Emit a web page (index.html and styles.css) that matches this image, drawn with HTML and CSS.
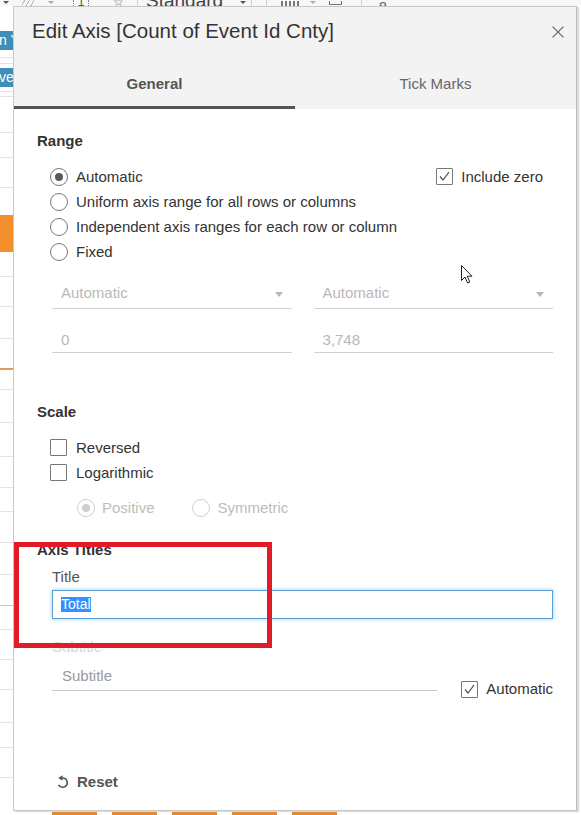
FILE: index.html
```html
<!DOCTYPE html>
<html>
<head>
<meta charset="utf-8">
<title>Edit Axis</title>
<link rel="stylesheet" href="styles.css">
</head>
<body>
<div class="app">
  <div class="toolbar">
    <span class="tb-tri dark m3"></span>
    <span class="tb-slash m13"></span>
    <span class="tb-tri m14"></span>
    <span class="tb-dot m19"><span class="tb-one">1</span></span>
    <span class="tb-star m24">☆</span>
    <span class="tb-sep m13"></span>
    <span class="tb-text m8">Standard</span>
    <span class="tb-tri dark m32"></span>
    <span class="tb-sep m5"></span>
    <span class="tb-sep m14"></span>
    <span class="tb-chart m14"></span>
    <span class="tb-tri m11"></span>
    <span class="tb-mon m13"></span>
    <span class="tb-sep m19"></span>
    <span class="tb-link m17">ⴰ</span>
  </div>
  <div class="canvas">
    <div class="strip">
      <div class="b h25"></div>
      <div class="pill h19"><span>n Y</span></div>
      <div class="r h8"></div>
      <div class="r h6"></div>
      <div class="b h4"></div>
      <div class="pill h19"><span>ve</span></div>
      <div class="r h5"></div>
      <div class="r h5"></div>
      <div class="r h36"></div>
      <div class="r h25"></div>
      <div class="r h30"></div>
      <div class="b h27"></div>
      <div class="obar h37"></div>
      <div class="r h25"></div>
      <div class="r h30"></div>
      <div class="r h32"></div>
      <div class="b h29"></div>
      <div class="oline h2"></div>
      <div class="r h20"></div>
      <div class="r h33"></div>
      <div class="r h34"></div>
      <div class="r h31"></div>
      <div class="r h24"></div>
      <div class="r h31"></div>
      <div class="r h32"></div>
      <div class="b h30"></div>
      <div class="tline h1"></div>
      <div class="r h24"></div>
      <div class="r h30"></div>
      <div class="r h30"></div>
      <div class="r h33"></div>
      <div class="r h25"></div>
      <div class="r h30"></div>
    </div>
    <div class="main">
      <div class="bars"><span></span><span></span><span></span><span></span><span></span></div>
    </div>
  </div>

  <div class="dialog">
    <div class="dlg-head">
      <div class="title-row">
        <span class="title">Edit Axis [Count of Event Id Cnty]</span>
        <svg class="close" width="12" height="12" viewBox="0 0 12 12"><path d="M0.6 0.6 L11.4 11.4 M11.4 0.6 L0.6 11.4" stroke="#666" stroke-width="1.2" fill="none"/></svg>
      </div>
      <div class="tabs">
        <div class="tab active">General</div>
        <div class="tab">Tick Marks</div>
      </div>
    </div>

    <div class="dlg-body">
      <div class="sec-h">Range</div>
      <div class="radios">
        <div class="row">
          <span class="radio on"></span><span class="lbl">Automatic</span>
          <span class="inczero"><span class="cb"><svg width="15" height="15" viewBox="0 0 15 15"><path d="M3 7.5 L6 11 L12 3.2" stroke="#555" stroke-width="1.2" fill="none"/></svg></span><span class="lbl">Include zero</span></span>
        </div>
        <div class="row"><span class="radio"></span><span class="lbl">Uniform axis range for all rows or columns</span></div>
        <div class="row"><span class="radio"></span><span class="lbl">Independent axis ranges for each row or column</span></div>
        <div class="row"><span class="radio"></span><span class="lbl">Fixed</span></div>
      </div>
      <div class="pair selects">
        <div class="select"><span>Automatic</span><span class="tri"></span></div>
        <div class="select"><span>Automatic</span><span class="tri"></span></div>
      </div>
      <div class="pair inputs">
        <div class="inp">0</div>
        <div class="inp">3,748</div>
      </div>

      <div class="sec-h scale-h">Scale</div>
      <div class="checks">
        <div class="row"><span class="cb sq"></span><span class="lbl">Reversed</span></div>
        <div class="row"><span class="cb sq"></span><span class="lbl">Logarithmic</span></div>
      </div>
      <div class="row sub-radios">
        <span class="radio dis on"></span><span class="lbl dim">Positive</span>
        <span class="radio dis sym"></span><span class="lbl dim">Symmetric</span>
      </div>

      <div class="sec-h axis-h">Axis Titles</div>
      <div class="fld-label">Title</div>
      <div class="title-input"><span class="sel">Total</span></div>
      <div class="fld-label faint">Subtitle</div>
      <div class="sub-row">
        <div class="sub-input">Subtitle</div>
        <div class="auto"><span class="cb"><svg width="15" height="15" viewBox="0 0 15 15"><path d="M3 7.5 L6 11 L12 3.2" stroke="#555" stroke-width="1.2" fill="none"/></svg></span><span class="lbl">Automatic</span></div>
      </div>
    </div>

    <div class="dlg-foot">
      <svg width="12" height="14" viewBox="0 0 12 14"><path d="M5.5 3 A4.6 4.6 0 1 1 1.6 9.8" stroke="#555" stroke-width="1.6" fill="none"/><path d="M1.2 3 L5.6 0.2 L5.6 5.8 Z" fill="#555"/></svg>
      <span class="reset">Reset</span>
    </div>
  </div>

  <div class="annot"></div>
  <svg class="cursor" width="13" height="20" viewBox="0 0 13 20"><path d="M0.5 0.5 L0.5 15.5 L4 12 L6.6 18 L8.8 17 L6.3 11.2 L11 11.2 Z" fill="#fff" stroke="#222" stroke-width="1"/></svg>
</div>
</body>
</html>
```

FILE: styles.css
```css
* { box-sizing: border-box; margin: 0; padding: 0; }
body { margin: 0; font-family: "Liberation Sans", Arial, sans-serif; color: #333; background: #fff; }

.app { position: relative; width: 581px; height: 815px; overflow: hidden; background: #fff; }

/* background toolbar (mostly hidden) */
.toolbar { height: 6px; display: flex; align-items: flex-end; overflow: hidden; background: #f7f7f7; }
.toolbar > * { flex-shrink: 0; }
.m3 { margin-left: 3px; } .m5 { margin-left: 5px; } .m8 { margin-left: 8px; } .m11 { margin-left: 11px; }
.m13 { margin-left: 13px; } .m14 { margin-left: 14px; } .m17 { margin-left: 17px; } .m19 { margin-left: 19px; }
.m24 { margin-left: 24px; } .m32 { margin-left: 32px; }
.tb-tri { width: 0; height: 0; border-left: 3px solid transparent; border-right: 3px solid transparent; border-top: 3px solid #aaa; margin-bottom: 2px; }
.tb-tri.dark { border-top-color: #555; }
.tb-slash { width: 12px; height: 6px; background: repeating-linear-gradient(120deg, transparent 0 2px, #bbb 2px 3px, transparent 3px 4px); }
.tb-dot { width: 16px; height: 6px; border-left: 1px dotted #888; border-right: 1px dotted #888; display: flex; justify-content: center; align-items: flex-end; }
.tb-one { font-size: 12px; line-height: 10px; color: #555; margin-bottom: -1px; }
.tb-star { font-size: 12px; line-height: 10px; color: #666; margin-bottom: -1px; }
.tb-sep { width: 1px; height: 6px; background: #d0d0d0; }
.tb-text { width: 62px; font-size: 19px; line-height: 19px; color: #444; margin-bottom: -4px; }
.tb-chart { width: 18px; height: 5px; background: repeating-linear-gradient(90deg, #777 0 2px, transparent 2px 4px); }
.tb-mon { width: 13px; height: 4px; border: 1px solid #777; border-top: none; margin-bottom: 1px; }
.tb-link { font-size: 12px; line-height: 10px; color: #666; margin-bottom: -2px; }

/* background sheet */
.canvas { display: flex; height: 809px; }
.strip { width: 13px; flex-shrink: 0; display: flex; flex-direction: column; overflow: hidden; }
.strip > div { flex-shrink: 0; }
.strip .r { border-bottom: 1px solid #e4e4e4; }
.pill { background: #3f8eb8; color: #fff; font-size: 14px; line-height: 19px; white-space: nowrap; overflow: hidden; }
.pill span { display: block; margin-left: -1px; }
.obar { background: #f28e2b; }
.oline { background: #e89a55; }
.tline { background: #e0c3a0; }
.h1 { height: 1px; } .h2 { height: 2px; } .h4 { height: 4px; } .h5 { height: 5px; } .h6 { height: 6px; }
.h8 { height: 8px; } .h19 { height: 19px; } .h20 { height: 20px; } .h24 { height: 24px; } .h25 { height: 25px; }
.h27 { height: 27px; } .h29 { height: 29px; } .h30 { height: 30px; } .h31 { height: 31px; } .h32 { height: 32px; }
.h33 { height: 33px; } .h34 { height: 34px; } .h36 { height: 36px; } .h37 { height: 37px; }
.main { flex: 1; display: flex; flex-direction: column; justify-content: flex-end; }
.bars { display: flex; gap: 15px; padding-left: 39px; height: 3px; }
.bars span { width: 45px; background: #e8892f; }

/* dialog */
.dialog {
  position: absolute; left: 13px; top: 6px; width: 564px; height: 805px;
  border: 1px solid #c8c8c8; border-right-color: #bdbdbd; background: #fff;
  box-shadow: 2px 1px 1px rgba(0,0,0,0.14);
  display: flex; flex-direction: column;
}
.dlg-head { height: 102px; background: #f3f3f3; flex-shrink: 0; }
.title-row { height: 51px; display: flex; justify-content: space-between; align-items: flex-start; padding: 12px 12px 0 18px; }
.title { font-size: 20.5px; line-height: 24px; color: #333; }
.close { margin-top: 7px; }
.tabs { display: flex; height: 51px; }
.tab { flex: 1; display: flex; align-items: center; justify-content: center; padding-top: 4px; border-bottom: 3px solid transparent; font-size: 15px; line-height: 18px; color: #666; }
.tab.active { border-bottom-color: #555; font-weight: bold; color: #555; }

.dlg-body { flex: 1; padding: 23px 23px 0 23px; }
.sec-h { font-size: 15px; font-weight: bold; line-height: 18px; color: #333; }
.lbl { font-size: 15px; line-height: 18px; color: #333; white-space: nowrap; }
.row { height: 25px; display: flex; align-items: center; }
.radios { margin-top: 14px; padding-left: 13px; }
.radio { width: 18px; height: 18px; border: 1px solid #777; border-radius: 50%; display: flex; align-items: center; justify-content: center; margin-right: 8px; flex-shrink: 0; }
.radio.on::after { content: ""; width: 8px; height: 8px; border-radius: 50%; background: #5a5a5a; }
.cb { width: 17px; height: 17px; border: 1px solid #777; border-radius: 1px; margin-right: 8px; flex-shrink: 0; display: flex; }
.cb.sq { margin-right: 9px; }
.inczero { margin-left: auto; margin-right: 10px; display: flex; align-items: center; }

.pair { display: grid; grid-template-columns: 1fr 1fr; column-gap: 22px; margin-left: 15px; }
.selects { margin-top: 17px; }
.select { height: 28px; border-bottom: 1px solid #d2d2d2; padding: 0 9px 5px 9px; display: flex; align-items: center; justify-content: space-between; font-size: 15px; color: #b8b8b8; }
.tri { width: 0; height: 0; border-left: 4px solid transparent; border-right: 4px solid transparent; border-top: 5px solid #b8b8b8; margin-top: 4px; }
.inputs { margin-top: 19px; }
.inp { height: 25px; border-bottom: 1px solid #d2d2d2; padding: 0 9px 1px; display: flex; align-items: center; font-size: 15px; color: #b8b8b8; }

.scale-h { margin-top: 50px; }
.checks { margin-top: 14px; padding-left: 13px; }
.sub-radios { margin-top: 10px; padding-left: 40px; }
.radio.dis { border-color: #cfcfcf; margin-right: 7px; }
.radio.dis.on::after { background: #cfcfcf; }
.radio.sym { margin-left: 37px; margin-right: 8px; }
.lbl.dim { color: #bdbdbd; }

.axis-h { margin-top: 21px; }
.fld-label { margin: 9px 0 0 15px; font-size: 15px; line-height: 18px; color: #555; }
.title-input { margin: 4px 0 0 15px; height: 29px; border: 1px solid #5a9fd6; box-shadow: 0 0 4px rgba(90,160,225,0.6); padding-left: 8px; display: flex; align-items: center; }
.sel { background: #3390ff; color: #fff; font-size: 14px; line-height: 15px; }
.fld-label.faint { margin-top: 19px; color: #d6d6d6; }
.sub-row { display: flex; align-items: flex-start; margin: 6px 0 0 15px; }
.sub-input { width: 386px; height: 29px; border-bottom: 1px solid #c8c8c8; padding-left: 10px; font-size: 15px; line-height: 28px; color: #9a9a9a; }
.auto { margin-left: 24px; margin-top: 18px; display: flex; align-items: center; }

.dlg-foot { flex-shrink: 0; display: flex; align-items: center; gap: 8px; padding: 0 0 19.5px 43px; }
.reset { font-size: 15px; font-weight: bold; line-height: 18px; color: #555; }

/* overlays */
.annot { position: absolute; left: 14px; top: 542px; width: 258px; height: 106px; border: 5px solid #e21c26; }
.cursor { position: absolute; left: 461px; top: 265px; }
```
